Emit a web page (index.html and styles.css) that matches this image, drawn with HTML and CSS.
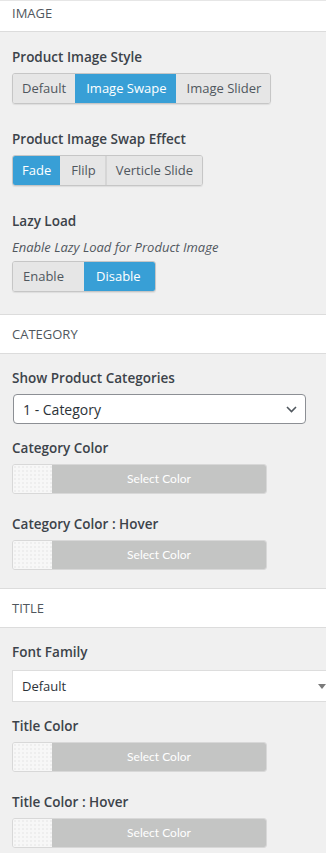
FILE: index.html
```html
<!DOCTYPE html>
<html lang="en">
<head>
<meta charset="UTF-8">
<meta name="viewport" content="width=device-width, initial-scale=1.0">
<title>Product Options</title>
<link rel="stylesheet" href="styles.css">
</head>
<body>
<div class="panel">
    <div class="section-head section-head-first">Image</div>
    <div class="section-body section-body-first">
        <div class="field field-toggle">
            <div class="field-label">Product Image Style</div>
            <div class="toggle-group">
                <span class="toggle">Default</span>
                <span class="toggle active">Image Swape</span>
                <span class="toggle">Image Slider</span>
            </div>
        </div>
        <div class="field field-toggle">
            <div class="field-label">Product Image Swap Effect</div>
            <div class="toggle-group">
                <span class="toggle active">Fade</span>
                <span class="toggle">Flilp</span>
                <span class="toggle">Verticle Slide</span>
            </div>
        </div>
        <div class="field">
            <div class="field-label">Lazy Load</div>
            <div class="field-desc">Enable Lazy Load for Product Image</div>
            <div class="toggle-group">
                <span class="toggle toggle-wide">Enable</span>
                <span class="toggle toggle-wide active">Disable</span>
            </div>
        </div>
    </div>

    <div class="section-head">Category</div>
    <div class="section-body">
        <div class="field field-select">
            <div class="field-label">Show Product Categories</div>
            <div class="select">
                <span>1 - Category</span>
                <svg width="11" height="7" viewBox="0 0 11 7"><path d="M1 1l4.5 4.5L10 1" fill="none" stroke="#50575e" stroke-width="1.6"/></svg>
            </div>
        </div>
        <div class="field">
            <div class="field-label">Category Color</div>
            <div class="color-pick"><span class="swatch"></span><span class="pick-text">Select Color</span></div>
        </div>
        <div class="field">
            <div class="field-label">Category Color : Hover</div>
            <div class="color-pick"><span class="swatch"></span><span class="pick-text">Select Color</span></div>
        </div>
    </div>

    <div class="section-head">Title</div>
    <div class="section-body">
        <div class="field field-select">
            <div class="field-label label-spaced">Font Family</div>
            <div class="select select-flat">
                <span>Default</span>
                <span class="caret"></span>
            </div>
        </div>
        <div class="field">
            <div class="field-label">Title Color</div>
            <div class="color-pick"><span class="swatch"></span><span class="pick-text">Select Color</span></div>
        </div>
        <div class="field">
            <div class="field-label">Title Color : Hover</div>
            <div class="color-pick"><span class="swatch"></span><span class="pick-text">Select Color</span></div>
        </div>
    </div>
</div>
</body>
</html>
```

FILE: styles.css
```css
body {
    margin: 0;
    padding: 0;
    background: #f0f0f0;
    font-family: "Open Sans", Arial, sans-serif;
    color: #3c434a;
    overflow: hidden;
}
.section-head {
    background: #fff;
    border-top: 1px solid #dcdcdc;
    border-bottom: 1px solid #dcdcdc;
    height: 38px;
    line-height: 38px;
    padding: 0 12px;
    font-size: 13px;
    text-transform: uppercase;
    color: #50575e;
}
.section-head-first {
    border-top-color: #e6e6e6;
    height: 30px;
    line-height: 24px;
}
.section-body {
    padding: 14px 12px 18px;
}
.section-body-first {
    padding-top: 15px;
    padding-bottom: 22px;
}
.field {
    margin-bottom: 20px;
}
.field:last-child {
    margin-bottom: 0;
}
.field-toggle {
    margin-bottom: 25px;
}
.field-select {
    margin-bottom: 14px;
}
.field-label {
    font-size: 13.5px;
    font-weight: 600;
    line-height: 20px;
    margin-bottom: 6px;
    color: #3c434a;
}
.label-spaced {
    margin-bottom: 8px;
}
.field-desc {
    font-size: 13px;
    font-style: italic;
    line-height: 20px;
    margin-bottom: 4px;
    color: #50575e;
}
.toggle-group {
    display: inline-flex;
    border: 1px solid #c6c6c6;
    border-radius: 3px;
    overflow: hidden;
    box-shadow: 0 1px 1px rgba(0, 0, 0, 0.08);
}
.toggle {
    height: 29px;
    line-height: 29px;
    padding: 0 9px;
    font-size: 13px;
    color: #50575e;
    background: #e6e6e6;
    border-left: 2px solid #d6d6d6;
}
.toggle:first-child {
    border-left: none;
}
.toggle.active {
    background: #389fd6;
    color: #fff;
    border-left-color: #389fd6;
}
.toggle.active + .toggle {
    border-left-color: #e6e6e6;
}
.toggle-wide {
    box-sizing: border-box;
    width: 71px;
    padding: 0 0 0 10px;
}
.select {
    display: flex;
    align-items: center;
    justify-content: space-between;
    height: 28px;
    margin: 1px 8px 0 1px;
    padding: 0 8px 0 9px;
    background: #fff;
    border: 1px solid #8c8f94;
    border-radius: 4px;
    font-size: 14px;
    color: #2c3338;
}
.select-flat {
    height: 30px;
    width: 304px;
    margin: 0;
    padding: 0 9px 0 9px;
    border: 1px solid #dddddd;
    border-radius: 0;
    font-size: 13px;
}
.caret {
    width: 0;
    height: 0;
    border-left: 4px solid transparent;
    border-right: 4px solid transparent;
    border-top: 5px solid #7a7a7a;
}
.color-pick {
    display: flex;
    width: 253px;
    height: 28px;
    border: 1px solid #d8d8d8;
    border-radius: 3px;
    overflow: hidden;
}
.swatch {
    width: 39px;
    background-color: #f7f7f7;
    background-image: radial-gradient(#e2e2e2 0.6px, transparent 0.8px);
    background-size: 4px 4px;
}
.pick-text {
    flex: 1;
    background: #c4c5c4;
    color: #fff;
    font-family: Lato, "Open Sans", sans-serif;
    font-size: 12px;
    line-height: 28px;
    text-align: center;
}
```
